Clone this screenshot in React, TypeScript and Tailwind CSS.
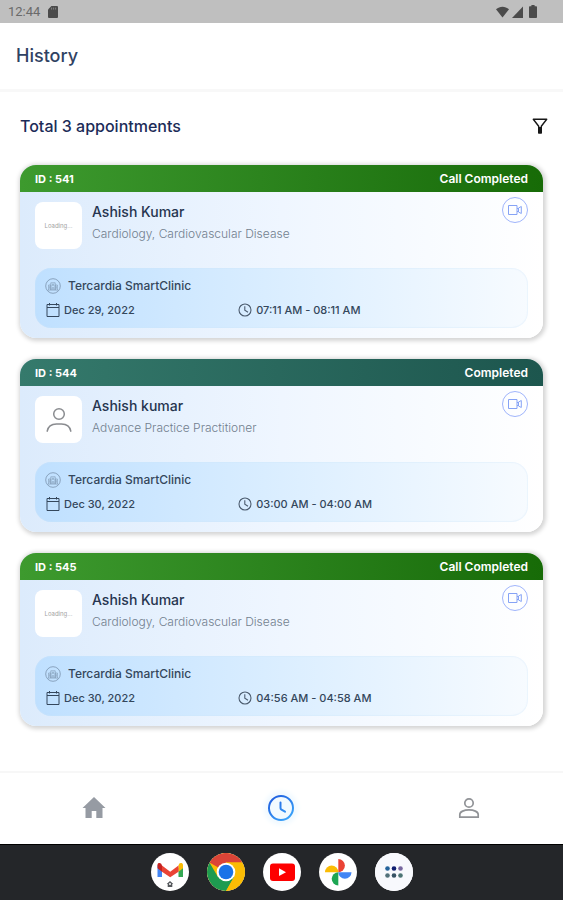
import React from "react";

type Appointment = {
  id: number;
  status: string;
  name: string;
  specialty: string;
  clinic: string;
  date: string;
  time: string;
  photo: "loading" | "person";
};

const appointments: Appointment[] = [
  {
    id: 541,
    status: "Call Completed",
    name: "Ashish Kumar",
    specialty: "Cardiology, Cardiovascular Disease",
    clinic: "Tercardia SmartClinic",
    date: "Dec 29, 2022",
    time: "07:11 AM - 08:11 AM",
    photo: "loading",
  },
  {
    id: 544,
    status: "Completed",
    name: "Ashish kumar",
    specialty: "Advance Practice Practitioner",
    clinic: "Tercardia SmartClinic",
    date: "Dec 30, 2022",
    time: "03:00 AM - 04:00 AM",
    photo: "person",
  },
  {
    id: 545,
    status: "Call Completed",
    name: "Ashish Kumar",
    specialty: "Cardiology, Cardiovascular Disease",
    clinic: "Tercardia SmartClinic",
    date: "Dec 30, 2022",
    time: "04:56 AM - 04:58 AM",
    photo: "loading",
  },
];

function StatusBar() {
  return (
    <div className="flex h-[23px] items-center justify-between bg-[#bfbfbf] pr-[26px] pl-2 text-[#4b4b4b]">
      <div className="flex items-center gap-2">
        <span className="font-[Roboto,sans-serif] text-[13px] leading-4 text-[#6a6a6a]">12:44</span>
        <svg className="h-3 w-[10px]" viewBox="0 0 10 12" fill="currentColor" aria-hidden="true">
          <path d="M3.4 0H9a1 1 0 0 1 1 1v10a1 1 0 0 1-1 1H1a1 1 0 0 1-1-1V3.4Z" />
          <path d="M3.6 1.6v2M5.6 1.6v2M7.6 1.6v2" stroke="#8d8d8d" strokeWidth=".8" />
        </svg>
      </div>
      <div className="flex items-center gap-[3px]">
        <svg className="h-3 w-[13px]" viewBox="0 0 13 12" fill="currentColor" aria-hidden="true">
          <path d="M0 3.2C3.8-.2 9.2-.2 13 3.2L6.5 11.5Z" />
        </svg>
        <svg className="h-3 w-[11px]" viewBox="0 0 11 12" fill="currentColor" aria-hidden="true">
          <path d="M11 .5V12H0Z" />
        </svg>
        <svg className="ml-[3px] h-[13px] w-2" viewBox="0 0 8 13" fill="currentColor" aria-hidden="true">
          <path d="M2.4 0h3.2v1.3h1.6q.8 0 .8.8v10q0 .9-.8.9H.8Q0 13 0 12.100V2.100q0-.8.8-.8h1.600Z" />
        </svg>
      </div>
    </div>
  );
}

function PersonOutline() {
  return (
    <svg className="h-[26px] w-[26px]" viewBox="0 0 26 26" fill="none" stroke="#8a8c90" strokeWidth="1.500" strokeLinecap="round" aria-hidden="true">
      <circle cx="13" cy="7" r="5.300" />
      <path d="M1.200 24.200c.8-4.600 4.600-7.200 9.300-7.200h5c4.700 0 8.500 2.600 9.300 7.200" />
    </svg>
  );
}

function ClinicIcon() {
  return (
    <svg className="h-4 w-4" viewBox="0 0 16 16" fill="none" stroke="#7b93ad" strokeWidth=".6" aria-hidden="true">
      <circle cx="8" cy="8" r="7.300" strokeWidth=".8" />
      <path d="M3.600 12V7h2.200v5M10.200 12V7h2.200v5M5.800 12V4.800h4.400V12M3 12.100h10M8 5.600v2.600M6.800 6.900h2.400M7.200 12V9.700h1.600V12M4.700 8.200v2.500M11.300 8.200v2.500" />
    </svg>
  );
}

function CalendarIcon() {
  return (
    <svg className="h-[14px] w-[14px]" viewBox="0 0 14 14" fill="none" stroke="#34475c" strokeWidth="1" aria-hidden="true">
      <path d="M1 1.500h12v12H1ZM1 4.500h12M3.500 0v2.500M10.500 0v2.500" />
    </svg>
  );
}

function ClockIcon() {
  return (
    <svg className="h-[14px] w-[14px]" viewBox="0 0 14 14" fill="none" stroke="#4b5b6e" strokeWidth="1.100" aria-hidden="true">
      <circle cx="7" cy="7" r="6" />
      <path d="M6.800 3.300V7.200l3.200 2" />
    </svg>
  );
}

function VideoIcon() {
  return (
    <svg className="h-[10px] w-[14px]" viewBox="0 0 14 10" fill="none" stroke="#86a3f5" strokeWidth="1" strokeLinejoin="round" aria-hidden="true">
      <path d="M.5.500h8.500v9H.5ZM10.500 3 13.300 1.500v7L10.500 7ZM9 3.500h1.500M9 6.500h1.500" />
    </svg>
  );
}

function AppointmentCard({ item }: { item: Appointment }) {
  const headerColor =
    item.status === "Completed"
      ? "bg-linear-to-r from-[#357a6c] to-[#1d564e]"
      : "bg-linear-to-r from-[#3d9a2e] to-[#176b07]";
  return (
    <article className="overflow-hidden rounded-2xl bg-linear-to-r from-[#dcebfc] via-[#eff6ff] to-white shadow-[1px_1px_4px_2px_rgba(0,0,0,0.17)]">
      <header className={`flex h-[27px] items-center justify-between px-[15px] leading-4 text-white ${headerColor}`}>
        <span className="text-[11px] font-bold">ID : {item.id}</span>
        <span className="text-xs font-semibold">{item.status}</span>
      </header>
      <div className="px-[15px] pb-[10px]">
        <div className="flex items-start pt-[10px]">
          <div className="flex h-[47px] w-[47px] shrink-0 items-center justify-center rounded-lg bg-white">
            {item.photo === "person" ? (
              <PersonOutline />
            ) : (
              <span className="text-[6px] leading-4 text-[#a3a3a3]">Loading...</span>
            )}
          </div>
          <div className="min-w-0 flex-1 pl-[10px]">
            <h2 className="text-sm leading-5 font-medium text-[#26354f]">{item.name}</h2>
            <p className="pt-1 text-xs leading-4 font-light text-[#727f8e]">{item.specialty}</p>
          </div>
          <button
            type="button"
            aria-label="Video call"
            className="-mt-[5px] flex h-[26px] w-[26px] shrink-0 items-center justify-center rounded-full border border-[#9fb4fb]"
          >
            <VideoIcon />
          </button>
        </div>
        <div className="mt-[19px] rounded-2xl bg-linear-to-r from-[#bfe0ff] via-[#dbeeff] to-[#f7fbff] py-[6px] pl-[10px] font-medium text-[#34475c] shadow-[inset_0_0_1px_1px_rgba(205,228,250,0.3)]">
          <div className="flex h-6 items-center gap-[7px] text-xs leading-4">
            <ClinicIcon />
            <span>{item.clinic}</span>
          </div>
          <div className="grid h-6 grid-cols-[2fr_3fr] items-center text-[11px] leading-4">
            <div className="flex items-center gap-1 pl-px">
              <CalendarIcon />
              <span>{item.date}</span>
            </div>
            <div className="flex items-center gap-1">
              <ClockIcon />
              <span>{item.time}</span>
            </div>
          </div>
        </div>
      </div>
    </article>
  );
}

function BottomNav() {
  return (
    <nav className="grid h-[73px] grid-cols-3 items-center border-t-2 border-[#f7f7f7] bg-white pb-[2px]">
      <button type="button" aria-label="Home" className="flex justify-center">
        <svg className="h-6 w-6" viewBox="0 0 24 24" fill="#969ba3" aria-hidden="true">
          <path d="M12 1 .5 12h3v10h6.200v-7h4.600v7h6.200V12h3Z" />
        </svg>
      </button>
      <button type="button" aria-label="History" className="flex justify-center">
        <svg className="h-7 w-7 rounded-full bg-[#f2faff] shadow-[0_0_5px_3px_#f0f9ff]" viewBox="0 0 28 28" fill="none" stroke="url(#history-stroke)" strokeWidth="2" strokeLinecap="round" aria-hidden="true">
          <defs>
            <linearGradient id="history-stroke" gradientUnits="userSpaceOnUse" x1="6" y1="4" x2="22" y2="25">
              <stop stopColor="#2262e0" />
              <stop offset="1" stopColor="#3ba4fa" />
            </linearGradient>
          </defs>
          <circle cx="14" cy="14" r="12" />
          <path d="M13.500 8.500v5.500q0 1 1 1.700l3.500 2" />
        </svg>
      </button>
      <button type="button" aria-label="Profile" className="flex justify-center">
        <svg className="h-6 w-6" viewBox="0 0 24 24" fill="none" stroke="#919397" strokeWidth="1.700" aria-hidden="true">
          <circle cx="12" cy="7" r="4.200" />
          <path d="M2.800 21.200v-2.600c0-3 4.500-4.700 9.200-4.700s9.200 1.700 9.200 4.700v2.600Z" />
        </svg>
      </button>
    </nav>
  );
}

function DockButton({ label, children }: { label: string; children: React.ReactNode }) {
  return (
    <button type="button" aria-label={label} className="flex h-[38px] w-[38px] items-center justify-center overflow-hidden rounded-full bg-white">
      <svg className="h-[38px] w-[38px]" viewBox="0 0 38 38" aria-hidden="true">
        {children}
      </svg>
    </button>
  );
}

function Dock() {
  return (
    <div className="flex h-14 items-center justify-center gap-[18px] border-t border-black bg-[#242629] pb-px">
      <DockButton label="Gmail">
        <path d="M6.500 12v12H11V15Z" fill="#4285f4" />
        <path d="M27.500 15v9H32V12Z" fill="#34a853" />
        <path d="M27.500 12.500v6.200l4.500-3.400V12c0-2.200-2.500-2.500-3.700-1.500Z" fill="#fbbc04" />
        <path d="M11 12.500v6.200l8.200 5.600 8.300-5.600v-6.200l-8.300 6.300Z" fill="#ea4335" />
        <path d="M6.500 12v3.300l4.500 3.400v-6.200l-.8-1.700c-1.500-1.300-3.700-.8-3.700 1.200Z" fill="#c5221f" />
        <path d="m19 28 3.300 3h-1v3h-4.600v-3h-1Z" fill="#55585c" />
        <circle cx="19" cy="31" r="1" fill="#fff" />
      </DockButton>
      <DockButton label="Chrome">
        <circle cx="19" cy="19" r="19" fill="#fbbc04" />
        <path d="M19 19 2.500 9.500A19 19 0 0 1 35.500 9.500H19Z" fill="#db4437" />
        <path d="M2.500 9.500A19 19 0 0 0 19 38l8.200-14.200L19 19 10.800 23.800Z" fill="#1e9b50" />
        <path d="M19 9.500h16.500A19 19 0 0 1 19 38l8.200-14.200Z" fill="#fbbc04" />
        <circle cx="19" cy="19" r="9.300" fill="#fff" />
        <circle cx="19" cy="19" r="7.300" fill="#1a73e8" />
      </DockButton>
      <DockButton label="YouTube">
        <rect x="7" y="10.500" width="25" height="17.500" rx="3" fill="#fe0000" />
        <path d="m16 15.300 7 3.900-7 3.900Z" fill="#fff" />
      </DockButton>
      <DockButton label="Photos">
        <path d="M19.300 6a6.600 6.600 0 0 1 0 13.200Z" fill="#ea4335" />
        <path d="M6 19.200a6.600 6.600 0 0 1 13.300 0Z" fill="#fbbc04" />
        <path d="M19.300 19.200h13.200a6.600 6.600 0 0 1-13.200 0Z" fill="#4285f4" />
        <path d="M19.300 19.200v13.200a6.600 6.600 0 0 1 0-13.200Z" fill="#1da653" />
      </DockButton>
      <DockButton label="All apps">
        <rect width="38" height="38" fill="#f8f9fd" />
        <circle cx="12.500" cy="15.500" r="2.300" fill="#24639b" />
        <circle cx="19" cy="15.500" r="2.300" fill="#101f70" />
        <circle cx="25.500" cy="15.500" r="2.300" fill="#77679f" />
        <circle cx="12.500" cy="22.500" r="2.300" fill="#52717a" />
        <circle cx="19" cy="22.500" r="2.300" fill="#365264" />
        <circle cx="25.500" cy="22.500" r="2.300" fill="#4c7474" />
      </DockButton>
    </div>
  );
}

export default function App() {
  return (
    <div className="flex min-h-screen flex-col bg-white font-[Inter,sans-serif]">
      <StatusBar />
      <header className="flex h-[69px] items-center border-b-[3px] border-[#f8f8f8] px-4">
        <h1 className="text-lg leading-6 font-medium text-[#304263]">History</h1>
      </header>
      <main className="flex-1 px-5 pt-[22px]">
        <div className="flex h-6 items-center justify-between">
          <p className="text-base leading-6 font-medium text-[#1c2c58]">Total 3 appointments</p>
          <button type="button" aria-label="Filter appointments" className="-mr-[5px]">
            <svg className="h-4 w-4" viewBox="0 0 16 16" fill="none" stroke="#171717" strokeWidth="1.400" strokeLinejoin="round" aria-hidden="true">
              <path d="M1.300 1.200h13.400L9.300 8.200V15H6.700V8.200Z" />
              <path d="M8 9V15" strokeWidth="2" />
            </svg>
          </button>
        </div>
        <div className="flex flex-col gap-[21px] pt-[27px] pb-6">
          {appointments.map((item) => (
            <AppointmentCard key={item.id} item={item} />
          ))}
        </div>
      </main>
      <BottomNav />
      <Dock />
    </div>
  );
}
